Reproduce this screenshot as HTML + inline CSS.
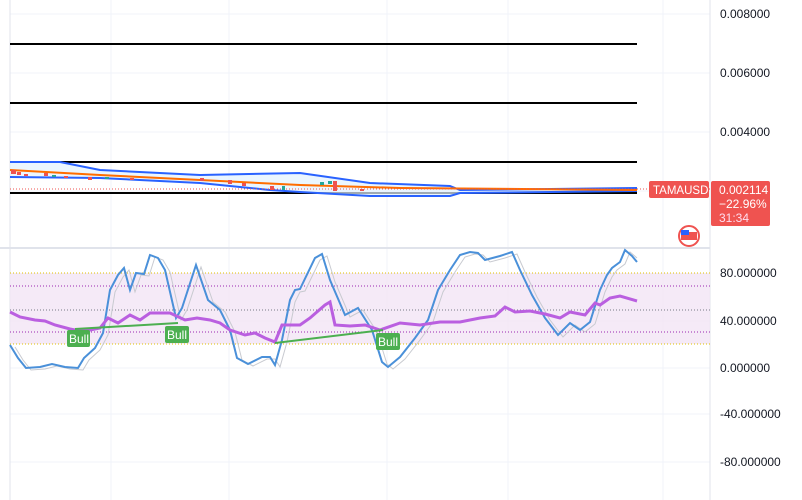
<!DOCTYPE html><html><head><style>
body{margin:0;width:802px;height:500px;background:#fff;font-family:"Liberation Sans",sans-serif;overflow:hidden;position:relative}
.ax{position:absolute;left:720px;font-size:12px;color:#131722}
</style></head><body>
<svg width="802" height="500" style="position:absolute;left:0;top:0">
<g stroke="#f0f3fa" stroke-width="1">
<line x1="111" y1="0" x2="111" y2="500"/><line x1="229" y1="0" x2="229" y2="500"/><line x1="387" y1="0" x2="387" y2="500"/><line x1="508" y1="0" x2="508" y2="500"/><line x1="663" y1="0" x2="663" y2="500"/>
<line x1="10" y1="14" x2="710" y2="14"/><line x1="10" y1="73" x2="710" y2="73"/><line x1="10" y1="132" x2="710" y2="132"/><line x1="10" y1="191" x2="710" y2="191"/>
<line x1="10" y1="368" x2="710" y2="368"/><line x1="10" y1="414" x2="710" y2="414"/><line x1="10" y1="462" x2="710" y2="462"/><line x1="10" y1="321" x2="710" y2="321"/>
</g>
<line x1="10" y1="0" x2="10" y2="500" stroke="#e0e3eb"/>
<line x1="710" y1="0" x2="710" y2="500" stroke="#e0e3eb"/>
<line x1="0" y1="248" x2="710" y2="248" stroke="#e0e3eb" stroke-width="2"/>
<g stroke="#000" stroke-width="2"><line x1="10" y1="44" x2="637" y2="44"/><line x1="10" y1="103" x2="637" y2="103"/><line x1="10" y1="162" x2="637" y2="162"/><line x1="10" y1="193" x2="637" y2="193"/></g>
<path d="M10,162 L60,162 L100,170 L200,175 L300,173 L370,183 L450,186 L460,190 L637,188 L637,191 L460,193 L450,196 L370,196 L300,192 L270,190 L200,183 L100,178 L10,177Z" fill="#e3f2fd" opacity=".7"/>
<polyline points="10,162 60,162 100,170 200,175 300,173 370,183 450,186 460,190 637,188" fill="none" stroke="#2962ff" stroke-width="2"/>
<polyline points="10,177 100,178 200,183 270,190 300,192 370,196 450,196 460,193 637,191" fill="none" stroke="#2962ff" stroke-width="2"/>
<polyline points="10,170 100,175 200,180 300,185 400,188 637,190" fill="none" stroke="#ff6d00" stroke-width="2"/>
<line x1="10" y1="189" x2="710" y2="189" stroke="#ef5350" stroke-dasharray="1 2"/>
<g fill="#ef5350"><rect x="11" y="170" width="5" height="4"/><rect x="17" y="172" width="4" height="3"/><rect x="24" y="174" width="4" height="2"/><rect x="44" y="173" width="4" height="3"/><rect x="64" y="176" width="4" height="2"/><rect x="88" y="177" width="4" height="3"/><rect x="130" y="178" width="4" height="2"/><rect x="200" y="178" width="4" height="3"/><rect x="228" y="180" width="4" height="4"/><rect x="242" y="183" width="4" height="3"/><rect x="270" y="186" width="4" height="4"/><rect x="333" y="181" width="4" height="10"/><rect x="360" y="189" width="4" height="2"/></g>
<g fill="#26a69a"><rect x="52" y="175" width="4" height="2"/><rect x="105" y="177" width="4" height="2"/><rect x="282" y="186" width="3" height="4"/><rect x="320" y="182" width="4" height="3"/><rect x="328" y="181" width="4" height="3"/></g>
<rect x="10" y="273" width="700" height="71" fill="#f3e5f5" opacity=".8"/>
<line x1="10" y1="273" x2="710" y2="273" stroke="#e0c000" stroke-dasharray="1 2"/>
<line x1="10" y1="344" x2="710" y2="344" stroke="#e0c000" stroke-dasharray="1 2"/>
<line x1="10" y1="286" x2="710" y2="286" stroke="#9c27b0" stroke-dasharray="1 2"/>
<line x1="10" y1="332" x2="710" y2="332" stroke="#9c27b0" stroke-dasharray="1 2"/>
<line x1="10" y1="310" x2="710" y2="310" stroke="#787b86" stroke-dasharray="1 2"/>
<polyline transform="translate(5,2)" points="10,345 18,358 26,368 40,367 52,364 65,367 78,368 84,358 95,348 103,333 110,290 118,275 124,268 130,290 136,273 144,274 150,255 158,258 165,270 176,318 182,308 196,265 208,300 220,310 230,330 237,358 248,364 262,357 270,357 275,365 282,340 290,300 295,290 300,289 315,258 322,254 330,280 345,315 358,308 372,330 382,362 388,367 400,357 415,338 428,320 438,290 450,270 460,255 470,252 478,253 485,260 500,256 512,252 520,270 532,295 545,318 558,335 570,323 580,330 590,322 600,290 607,275 612,268 620,262 625,250 632,256" fill="none" stroke="#c8cad0" stroke-width="1"/>
<polyline points="10,345 18,358 26,368 40,367 52,364 65,367 78,368 84,358 95,348 103,333 110,290 118,275 124,268 130,290 136,273 144,274 150,255 158,258 165,270 176,318 182,308 196,265 208,300 220,310 230,330 237,358 248,364 262,357 270,357 275,365 282,340 290,300 295,290 300,289 315,258 322,254 330,280 345,315 358,308 372,330 382,362 388,367 400,357 415,338 428,320 438,290 450,270 460,255 470,252 478,253 485,260 500,256 512,252 520,270 532,295 545,318 558,335 570,323 580,330 590,322 600,290 607,275 612,268 620,262 625,250 632,256 637,262" fill="none" stroke="#4a90d9" stroke-width="2"/>
<polyline points="10,312 20,317 35,320 45,321 55,325 70,329 80,331 90,330 100,328 108,318 118,323 130,315 140,320 150,313 170,313 185,320 197,318 210,320 220,323 230,330 245,335 255,333 265,338 275,342 282,325 300,325 310,318 325,305 330,302 335,325 350,326 365,325 380,330 400,323 420,325 440,322 460,322 480,318 495,316 505,307 515,312 530,311 545,314 560,318 570,312 585,315 595,303 600,305 610,298 620,296 637,301" fill="none" stroke="#ba5fe0" stroke-width="3"/>
<line x1="75" y1="329" x2="178" y2="323" stroke="#4caf50" stroke-width="2"/>
<line x1="275" y1="343" x2="383" y2="330" stroke="#4caf50" stroke-width="2"/>
<g fill="#4caf50"><rect x="67" y="330" width="23" height="17" rx="2"/><rect x="165" y="326" width="24" height="17" rx="2"/><rect x="376" y="333" width="24" height="17" rx="2"/></g>
<g fill="#fff" font-size="12" font-family="Liberation Sans"><text x="69" y="343">Bull</text><text x="167" y="339">Bull</text><text x="378" y="346">Bull</text></g>
<rect x="649" y="181" width="60" height="17" rx="2" fill="#ef5350"/>
<text x="653" y="194" fill="#fff" font-size="11.5" font-family="Liberation Sans">TAMAUSD</text>
<rect x="711" y="181" width="59" height="45" rx="2" fill="#ef5350"/>
<g fill="#fff" font-size="12" font-family="Liberation Sans"><text x="719" y="194">0.002114</text><text x="719" y="208">−22.96%</text><text x="719" y="222" fill="#fde">31:34</text></g>
<circle cx="689" cy="236" r="10" fill="#fff" stroke="#ef5350" stroke-width="2"/>
<rect x="681" y="232" width="16" height="8" fill="#ef5350"/><rect x="681" y="230" width="8" height="5" fill="#2962ff"/>
</svg>
<div class="ax" style="top:7px">0.008000</div>
<div class="ax" style="top:66px">0.006000</div>
<div class="ax" style="top:125px">0.004000</div>
<div class="ax" style="top:266px">80.000000</div>
<div class="ax" style="top:314px">40.000000</div>
<div class="ax" style="top:361px">0.000000</div>
<div class="ax" style="top:407px">-40.000000</div>
<div class="ax" style="top:455px">-80.000000</div>
</body></html>
